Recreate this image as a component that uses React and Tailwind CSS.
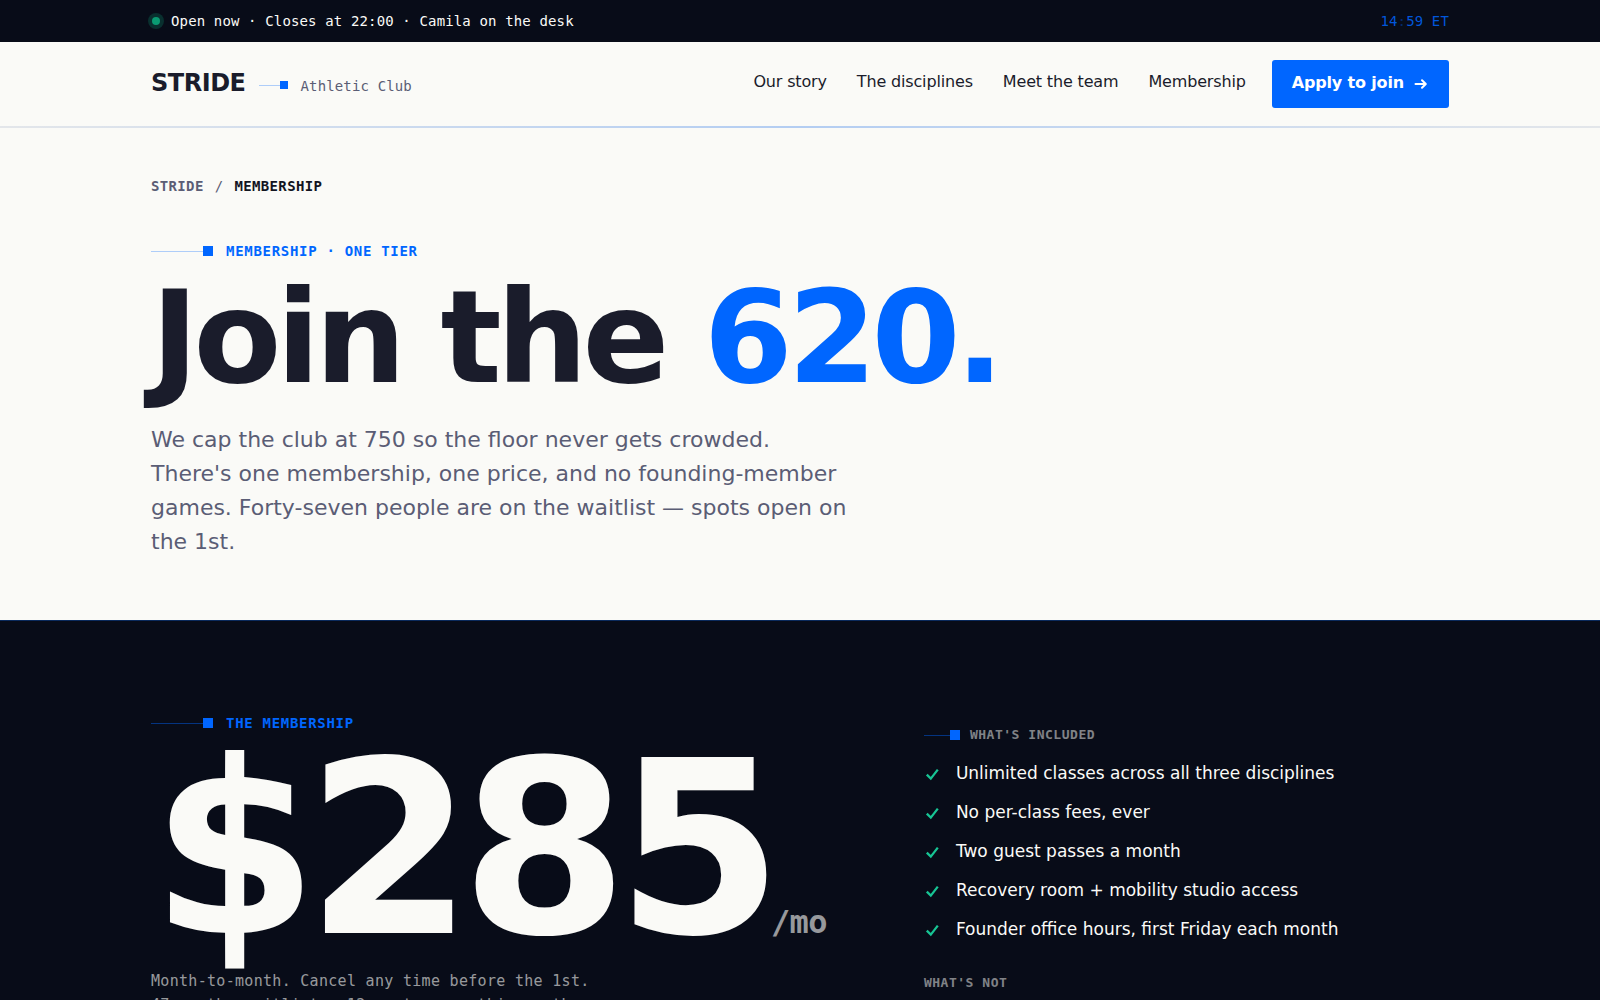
import React from "react";

const navLinks = [
  { label: "Our story", href: "#story" },
  { label: "The disciplines", href: "#disciplines" },
  { label: "Meet the team", href: "#team" },
  { label: "Membership", href: "#membership" },
];

const included = [
  "Unlimited classes across all three disciplines",
  "No per-class fees, ever",
  "Two guest passes a month",
  "Recovery room + mobility studio access",
  "Founder office hours, first Friday each month",
];

const Container = ({ className = "", children }) => (
  <div className={`mx-auto w-full max-w-[1362px] px-8 ${className}`}>{children}</div>
);

// Thin line that ends in a square, used before eyebrows
const Marker = ({ line = "w-[52px]", square = "size-2.5", tone = "bg-[#0066ff]/30" }) => (
  <span className="flex shrink-0 items-center" aria-hidden="true">
    <span className={`h-px ${line} ${tone}`} />
    <span className={`${square} bg-[#0066ff]`} />
  </span>
);

const Eyebrow = ({ tone, children }) => (
  <p className="flex items-center gap-[13px] font-['DejaVu_Sans_Mono',monospace] text-sm leading-5 font-bold tracking-wider text-[#0066ff] uppercase">
    <Marker tone={tone} />
    {children}
  </p>
);

const ArrowIcon = () => (
  <svg viewBox="0 0 16 16" className="size-4" fill="none" stroke="currentColor" strokeWidth="2" aria-hidden="true">
    <path d="M2.5 9h10M9 5.2l3.8 3.8L9 12.8" strokeLinecap="round" strokeLinejoin="round" />
  </svg>
);

const CheckIcon = () => (
  <svg viewBox="0 0 20 20" className="mt-1 size-5 shrink-0" fill="none" stroke="#17c594" strokeWidth="2.3" aria-hidden="true">
    <path d="M2.8 10.6l4 4 7-9" />
  </svg>
);

const TopBar = () => (
  <div className="bg-[#080c18] text-[#fafaf7]">
    <Container className="flex items-center justify-between py-[11px] font-['DejaVu_Sans_Mono',monospace] text-sm leading-5 tracking-[0.01em]">
      <p className="flex items-center gap-[11px]">
        <span className="ml-px size-2 rounded-full bg-[#0a9a72] ring-4 ring-[#0a9a72]/25" />
        Open now · Closes at 22:00 · Camila on the desk
      </p>
      <time className="text-[#0066ff]/85">
        14<span className="opacity-40">:</span>59 ET
      </time>
    </Container>
  </div>
);

const Header = () => (
  <header>
    <Container className="flex items-center justify-between py-[18px]">
      <a href="#home" className="flex items-center gap-[13px]">
        <span className="pb-0.5 text-2xl leading-8 font-bold tracking-[-0.02em]">STRIDE</span>
        <span className="pt-0.5">
          <Marker line="w-[21px]" square="size-2" />
        </span>
        <span className="pt-1 font-['DejaVu_Sans_Mono',monospace] text-sm leading-5 tracking-[0.01em] text-[#5a5d75]">
          Athletic Club
        </span>
      </a>
      <nav className="flex items-center gap-[26px] text-base leading-6 tracking-[-0.01em]">
        <ul className="flex gap-[30px] pb-1">
          {navLinks.map((link) => (
            <li key={link.label}>
              <a href={link.href}>{link.label}</a>
            </li>
          ))}
        </ul>
        <a
          href="#apply"
          className="flex items-center gap-[9px] rounded-[3px] bg-[#0066ff] px-5 pt-[11px] pb-[13px] font-bold text-white"
        >
          Apply to join
          <ArrowIcon />
        </a>
      </nav>
    </Container>
    <div className="h-0.5 bg-linear-to-r from-[#e3e6ea] via-[#b3cdf2] to-[#e3e6ea]" />
  </header>
);

const Hero = () => (
  <section>
    <Container className="pt-12 pb-[61px]">
      <nav
        aria-label="Breadcrumb"
        className="flex gap-[11px] font-['DejaVu_Sans_Mono',monospace] text-sm leading-5 font-bold tracking-wide text-[#5a5d75] uppercase"
      >
        <a href="#home">Stride</a>
        <span className="font-normal">/</span>
        <span className="text-[#12141f]">Membership</span>
      </nav>
      <div className="mt-[45px]">
        <Eyebrow>Membership · One tier</Eyebrow>
      </div>
      <h1 className="mt-4 text-9xl leading-[122px] font-bold tracking-[-0.04em]">
        Join the <span className="text-[#0066ff]">620.</span>
      </h1>
      <p className="mt-6 max-w-[704px] text-[22px] leading-[34px] text-[#5a5d75]">
        We cap the club at 750 so the floor never gets crowded. There's one membership, one price,
        and no founding-member games. Forty-seven people are on the waitlist — spots open on the
        1st.
      </p>
    </Container>
  </section>
);

const Price = () => (
  <section className="border-t border-[#0a2a5c] bg-[#080c18] text-[#fafaf7]">
    <Container className="grid grid-cols-[1.35fr_1fr] gap-16 pt-[92px] pb-24">
      <div>
        <Eyebrow tone="bg-[#0066ff]/45">The membership</Eyebrow>
        <p className="mt-[15px] text-[240px] leading-[204px] font-bold tracking-[-0.05em] whitespace-nowrap">
          $285
          <span className="font-['DejaVu_Sans_Mono',monospace] text-[32px] leading-none tracking-[-0.02em] text-[#fafaf7]/60">
            /mo
          </span>
        </p>
        <p className="mt-[17px] font-['DejaVu_Sans_Mono',monospace] text-[15px] leading-6 tracking-[0.02em] text-[#fafaf7]/60">
          Month-to-month. Cancel any time before the 1st.
          <br />
          47 on the waitlist · 12 spots open this month.
        </p>
      </div>
      <div className="pt-3">
        <h2 className="flex items-center gap-2.5 font-['DejaVu_Sans_Mono',monospace] text-[13px] leading-5 font-bold tracking-[0.04em] text-[#fafaf7]/50 uppercase">
          <Marker line="w-[26px]" tone="bg-[#0066ff]/45" />
          What's included
        </h2>
        <ul className="mt-[15px] flex flex-col gap-3 text-[17px] leading-[27px]">
          {included.map((item) => (
            <li key={item} className="flex items-start gap-3">
              <CheckIcon />
              {item}
            </li>
          ))}
        </ul>
        <h2 className="mt-[30px] font-['DejaVu_Sans_Mono',monospace] text-[13px] leading-5 font-bold tracking-[0.04em] text-[#fafaf7]/50 uppercase">
          What's not
        </h2>
      </div>
    </Container>
  </section>
);

const App = () => {
  return (
    <div className="min-h-screen bg-[#fafaf7] font-['DejaVu_Sans',sans-serif] text-[#1a1c2b]">
      <TopBar />
      <Header />
      <main>
        <Hero />
        <Price />
      </main>
    </div>
  );
};

export default App;
